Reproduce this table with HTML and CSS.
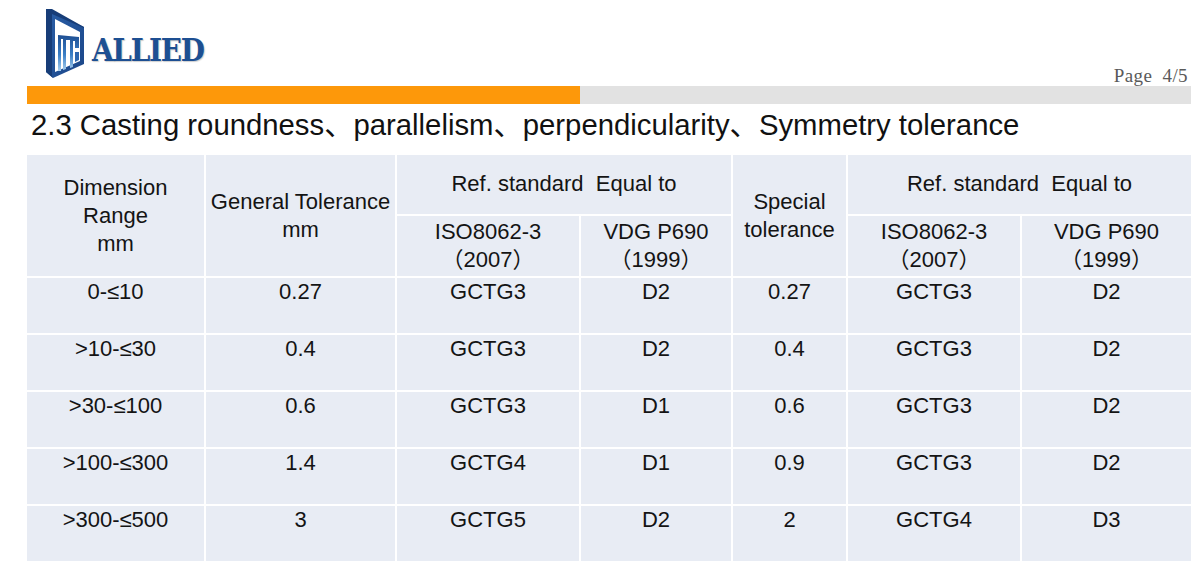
FILE: index.html
```html
<!DOCTYPE html>
<html lang="en">
<head>
<meta charset="utf-8">
<title>Casting tolerance</title>
<link rel="stylesheet" href="styles.css">
</head>
<body>
<header class="top">
  <div class="brand">
    <svg class="brand-icon" width="44" height="74" viewBox="0 0 44 74" aria-hidden="true">
      <defs>
        <linearGradient id="barg" x1="0" y1="0" x2="0" y2="1">
          <stop offset="0" stop-color="#1f4f93"/>
          <stop offset="0.55" stop-color="#3b7fc6"/>
          <stop offset="1" stop-color="#a9d0ef"/>
        </linearGradient>
        <linearGradient id="frameg" x1="0" y1="0" x2="1" y2="1">
          <stop offset="0" stop-color="#2a5fa8"/>
          <stop offset="1" stop-color="#1b4688"/>
        </linearGradient>
      </defs>
      <polygon points="2,3 40,21 40,58 9,72 2,66" fill="url(#frameg)"/>
      <polygon points="2,3 8,3 40,21 40,22 8,8 8,70 9,72 2,66" fill="#173d78"/>
      <polygon points="11,13 36,26 36,55 11,66" fill="#ffffff"/>
      <polygon points="14,29 35,31 35,42 31,42 31,35 29,35 29,61 26,62 26,34 22,34 22,63 19,64 19,33 17,33 17,65 14,65" fill="url(#barg)"/>
      <polygon points="31,46 35,46 35,54 31,56" fill="#2d67b0"/>
    </svg>
    <span class="brand-name">ALLIED</span>
  </div>
  <div class="page">Page&nbsp;&nbsp;4/5</div>
</header>

<div class="bar"><div class="bar-fill"></div></div>

<h1 class="title">2.3 Casting roundness、parallelism、perpendicularity、Symmetry tolerance</h1>

<div class="grid">
  <div class="cell head span-rows c1"><div>Dimension<br>Range<br>mm</div></div>
  <div class="cell head span-rows c2"><div>General Tolerance<br>mm</div></div>
  <div class="cell head group c3"><div>Ref. standard&nbsp;&nbsp;Equal to</div></div>
  <div class="cell head span-rows c5"><div>Special<br>tolerance</div></div>
  <div class="cell head group c6"><div>Ref. standard&nbsp;&nbsp;Equal to</div></div>
  <div class="cell head sub"><div>ISO8062-3<br>（2007）</div></div>
  <div class="cell head sub"><div>VDG P690<br>（1999）</div></div>
  <div class="cell head sub"><div>ISO8062-3<br>（2007）</div></div>
  <div class="cell head sub"><div>VDG P690<br>（1999）</div></div>

  <div class="cell">0-≤10</div><div class="cell">0.27</div><div class="cell">GCTG3</div><div class="cell">D2</div><div class="cell">0.27</div><div class="cell">GCTG3</div><div class="cell">D2</div>
  <div class="cell">&gt;10-≤30</div><div class="cell">0.4</div><div class="cell">GCTG3</div><div class="cell">D2</div><div class="cell">0.4</div><div class="cell">GCTG3</div><div class="cell">D2</div>
  <div class="cell">&gt;30-≤100</div><div class="cell">0.6</div><div class="cell">GCTG3</div><div class="cell">D1</div><div class="cell">0.6</div><div class="cell">GCTG3</div><div class="cell">D2</div>
  <div class="cell">&gt;100-≤300</div><div class="cell">1.4</div><div class="cell">GCTG4</div><div class="cell">D1</div><div class="cell">0.9</div><div class="cell">GCTG3</div><div class="cell">D2</div>
  <div class="cell">&gt;300-≤500</div><div class="cell">3</div><div class="cell">GCTG5</div><div class="cell">D2</div><div class="cell">2</div><div class="cell">GCTG4</div><div class="cell">D3</div>
</div>
</body>
</html>
```

FILE: styles.css
```css
* { box-sizing: border-box; }

html, body {
  margin: 0;
  padding: 0;
  background: #ffffff;
}

body {
  width: 1200px;
  height: 562px;
  overflow: hidden;
  font-family: "Liberation Sans", Arial, "Noto Sans CJK SC", sans-serif;
  color: #141414;
}

.top {
  height: 86px;
  display: flex;
  justify-content: space-between;
  align-items: flex-end;
  padding: 0 12px 0 44px;
}

.brand {
  align-self: flex-start;
  padding-top: 6px;
  display: flex;
  align-items: flex-start;
}

.brand-icon {
  display: block;
}

.brand-name {
  margin-top: 29px;
  margin-left: 4px;
  font-family: "DejaVu Serif", "Liberation Serif", serif;
  font-weight: bold;
  font-stretch: condensed;
  font-size: 31px;
  line-height: 31px;
  letter-spacing: -1.3px;
  color: #1d4f92;
  text-shadow: 1px 1px 1px rgba(60, 60, 60, 0.25);
}

.page {
  font-family: "Liberation Serif", "Times New Roman", serif;
  font-size: 19px;
  line-height: 19px;
  letter-spacing: 0.4px;
  color: #5a5a5a;
  margin-bottom: 1px;
}

.bar {
  margin: 0 9px 0 27px;
  height: 18px;
  background: #e2e2e2;
}

.bar-fill {
  width: 553px;
  height: 100%;
  background: #fd980a;
}

.title {
  margin: 0 0 11px 0;
  padding: 1px 0 0 31px;
  font-size: 29.3px;
  line-height: 39px;
  font-weight: normal;
  color: #111111;
  white-space: nowrap;
  font-family: "Liberation Sans", Arial, "Noto Sans CJK SC", sans-serif;
}

.grid {
  margin-left: 27px;
  width: 1164px;
  display: grid;
  grid-template-columns: 177px 189px 182px 150px 113px 172px 169px;
  grid-template-rows: 59px 60px repeat(5, 55px);
  gap: 2px;
  font-size: 22px;
  line-height: 28px;
  color: #141414;
}

.cell {
  background: #e8ecf4;
  text-align: center;
  padding-top: 0;
  white-space: nowrap;
}

.cell.head {
  display: flex;
  align-items: center;
  justify-content: center;
  padding-top: 0;
}

.span-rows { grid-row: span 2; }
.group { grid-column: span 2; }
.c1 { grid-column: 1; }
.c2 { grid-column: 2; }
.c3 { grid-column: 3 / span 2; }
.c5 { grid-column: 5; }
.c6 { grid-column: 6 / span 2; }

.c2 > div { padding-top: 1px; }
.group > div { padding-bottom: 1px; }
```
